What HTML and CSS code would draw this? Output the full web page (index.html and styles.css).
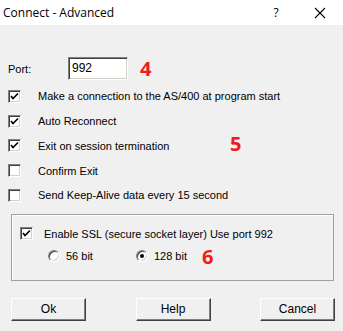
FILE: index.html
```html
<!DOCTYPE html>
<html>
<head>
<meta charset="utf-8">
<link rel="stylesheet" href="styles.css">
</head>
<body>
<div class="window">
  <div class="titlebar">
    <span class="title">Connect - Advanced</span>
    <span class="help-q">?</span>
    <svg class="close" width="12" height="12" viewBox="0 0 12 12"><path d="M1 1 L11 11 M11 1 L1 11" stroke="#000" stroke-width="1.1" fill="none"/></svg>
  </div>
  <div class="body">
    <div class="port-row">
      <span class="port-label">Port:</span>
      <div class="input">992</div>
      <span class="anno anno-4">4</span>
    </div>
    <div class="options">
      <div class="opt"><span class="cb checked"><svg width="9" height="9" viewBox="0 0 9 9"><path d="M1 4 L3 6.5 L8 1.5" stroke="#000" stroke-width="1.6" fill="none"/></svg></span><span class="lbl">Make a connection to the AS/400 at program start</span></div>
      <div class="opt"><span class="cb checked"><svg width="9" height="9" viewBox="0 0 9 9"><path d="M1 4 L3 6.5 L8 1.5" stroke="#000" stroke-width="1.6" fill="none"/></svg></span><span class="lbl">Auto Reconnect</span></div>
      <div class="opt"><span class="cb checked"><svg width="9" height="9" viewBox="0 0 9 9"><path d="M1 4 L3 6.5 L8 1.5" stroke="#000" stroke-width="1.6" fill="none"/></svg></span><span class="lbl">Exit on session termination</span></div>
      <div class="opt"><span class="cb"></span><span class="lbl">Confirm Exit</span></div>
      <div class="opt"><span class="cb"></span><span class="lbl">Send Keep-Alive data every 15 second</span></div>
      <span class="anno anno-5">5</span>
    </div>
    <div class="group">
      <div class="opt ssl"><span class="cb checked"><svg width="9" height="9" viewBox="0 0 9 9"><path d="M1 4 L3 6.5 L8 1.5" stroke="#000" stroke-width="1.6" fill="none"/></svg></span><span class="lbl">Enable SSL (secure socket layer) Use port 992</span></div>
      <div class="radios">
        <div class="radio-item r56"><span class="rb"></span><span class="lbl">56 bit</span></div>
        <div class="radio-item r128"><span class="rb on"><span class="dot"></span></span><span class="lbl">128 bit</span></div>
        <span class="anno anno-6">6</span>
      </div>
    </div>
    <div class="buttons">
      <div class="btn">Ok</div>
      <div class="btn">Help</div>
      <div class="btn">Cancel</div>
    </div>
  </div>
</div>
</body>
</html>
```
FILE: styles.css
```css
* { box-sizing: border-box; }
html, body { margin: 0; padding: 0; }
body {
  width: 343px;
  height: 331px;
  background: #f0f0f0;
  font-family: "Liberation Sans", Arial, sans-serif;
  font-size: 11px;
  color: #000;
  overflow: hidden;
}
.window { width: 343px; height: 331px; }
.titlebar {
  height: 25px;
  background: #fff;
  display: flex;
  align-items: center;
  font-family: "Open Sans", "Noto Sans", sans-serif;
  font-size: 12px;
  position: relative;
}
.title { padding-left: 3px; flex: 1; }
.help-q { width: 20px; text-align: center; font-size: 12px; margin-right: 28px; }
.close { margin-right: 17px; }
.body { position: relative; padding: 32px 0 0 8px; }
.port-row { display: flex; align-items: center; height: 23px; }
.port-label { width: 60px; }
.input {
  width: 60px;
  height: 23px;
  background: #fff;
  border-top: 1px solid #808080;
  border-left: 1px solid #808080;
  border-right: 1px solid #fff;
  border-bottom: 1px solid #fff;
  box-shadow: inset 1px 1px 0 #404040, inset -1px -1px 0 #d4d0c8;
  padding: 3px 0 0 3px;
  font-size: 12px;
}
.anno {
  color: #ee1c1c;
  font-family: "Open Sans", "Noto Sans", sans-serif;
  font-weight: 700;
  font-size: 20px;
  line-height: 1;
}
.anno-4 { margin-left: 12px; }
.options { position: relative; margin-top: 4px; }
.opt { display: flex; align-items: center; height: 24.75px; }
.cb {
  width: 13px; height: 13px;
  background: #fff;
  border-top: 1px solid #808080;
  border-left: 1px solid #808080;
  border-right: 1px solid #fff;
  border-bottom: 1px solid #fff;
  box-shadow: inset 1px 1px 0 #404040, inset -1px -1px 0 #d4d0c8;
  display: flex; align-items: center; justify-content: center;
  flex: none;
}
.lbl { margin-left: 17px; white-space: nowrap; }
.anno-5 { position: absolute; left: 222px; top: 50px; }
.group {
  margin: 6px 0 0 3px;
  width: 323px;
  height: 67px;
  border: 1px solid #a0a0a0;
  box-shadow: inset 1px 1px 0 #fff;
  padding: 0 0 0 8px;
  position: relative;
}
.ssl { height: 36px; padding-top: 2px; }
.ssl .lbl { margin-left: 11px; }
.radios { display: flex; align-items: center; height: 14px; margin-top: -2px; padding-left: 28px; }
.radio-item { display: flex; align-items: center; }
.radio-item .lbl { margin-left: 6px; }
.r128 { margin-left: 43px; }
.rb {
  width: 12px; height: 12px;
  border-radius: 50%;
  background: #fff;
  border: 1px solid;
  border-color: #808080 #fff #fff #808080;
  box-shadow: inset 1px 1px 0 #404040, inset -1px -1px 0 #d4d0c8;
  display: flex; align-items: center; justify-content: center;
  flex: none;
}
.dot { width: 4px; height: 4px; border-radius: 50%; background: #000; }
.anno-6 { margin-left: 15px; margin-top: 2px; }
.buttons {
  display: flex;
  justify-content: space-between;
  margin-top: 17px;
  padding-left: 3px;
  width: 327px;
}
.btn {
  width: 75px; height: 23px;
  background: #f0f0f0;
  border-top: 1px solid #fff;
  border-left: 1px solid #fff;
  border-right: 1px solid #404040;
  border-bottom: 1px solid #404040;
  box-shadow: inset -1px -1px 0 #808080;
  display: flex; align-items: center; justify-content: center;
  font-size: 12px;
}
```
